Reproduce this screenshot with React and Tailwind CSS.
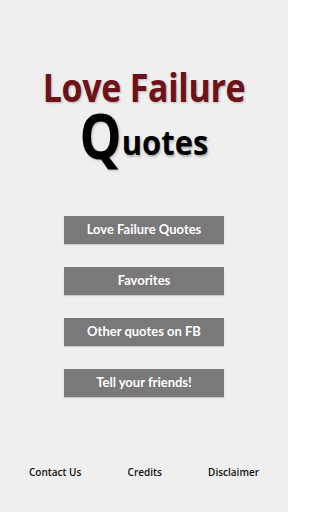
import React from "react";

const buttons = ["Love Failure Quotes", "Favorites", "Other quotes on FB", "Tell your friends!"];

const links = ["Contact Us", "Credits", "Disclaimer"];

export default function App() {
  return (
    <div className="w-[288px] h-[512px] bg-[#efefef] flex flex-col items-center overflow-hidden">
      <div className="mt-[70px] flex flex-col items-center font-['Open_Sans',sans-serif] font-bold [text-shadow:1px_1px_2px_rgba(0,0,0,0.25)]">
        <div className="text-[34px] leading-none text-[#6d1218] tracking-[-0.3px] scale-y-[1.15]">Love Failure</div>
        <div className="flex items-end mt-[4px] text-black">
          <span className="text-[53px] leading-none scale-y-[1.18]">Q</span>
          <span className="text-[31px] leading-none scale-y-[1.12] mb-[3px]">uotes</span>
        </div>
      </div>

      <div className="mt-[55px] flex flex-col gap-[23px]">
        {buttons.map((b) => (
          <div
            key={b}
            className="w-[160px] h-[28px] bg-[#7a7878] flex items-center justify-center text-white font-['Lato',sans-serif] font-bold text-[13px] shadow-[0_1px_1px_rgba(0,0,0,0.15)]"
          >
            {b}
          </div>
        ))}
      </div>

      <div className="mt-auto mb-[32px] w-full px-[29px] flex justify-between text-[10px] font-semibold text-[#111] font-['Open_Sans',sans-serif]">
        {links.map((l) => (
          <span key={l}>{l}</span>
        ))}
      </div>
    </div>
  );
}
